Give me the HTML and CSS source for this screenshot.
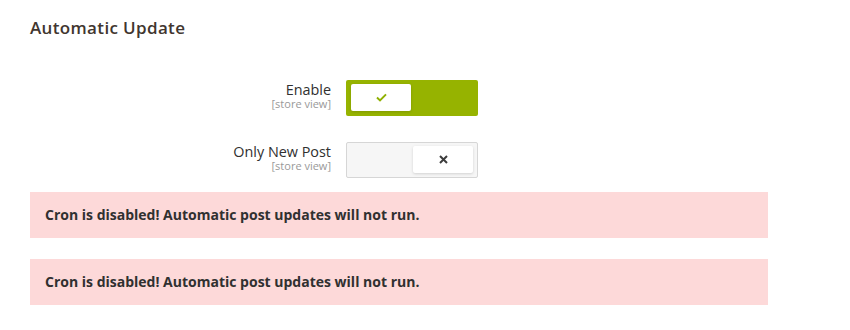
FILE: index.html
```html
<!DOCTYPE html>
<html lang="en">

<head>
    <meta charset="UTF-8">
    <title>Automatic Update</title>
    <link rel="stylesheet" href="styles.css">
</head>

<body>
    <div class="section">
        <h2 class="section-title">Automatic Update</h2>

        <div class="fields">
            <div class="field">
                <div class="field-label">
                    <span class="label-text">Enable</span>
                    <span class="scope">[store view]</span>
                </div>
                <div class="switch switch-on">
                    <span class="knob">
                        <svg width="11" height="9" viewBox="0 0 11 9">
                            <path d="M1 4.6 L4 7.4 L10 1.4" fill="none" stroke="#8fb000" stroke-width="2" />
                        </svg>
                    </span>
                </div>
            </div>

            <div class="field">
                <div class="field-label">
                    <span class="label-text">Only New Post</span>
                    <span class="scope">[store view]</span>
                </div>
                <div class="switch switch-off">
                    <span class="knob">
                        <svg width="9" height="9" viewBox="0 0 9 9">
                            <path d="M1 1 L8 8 M8 1 L1 8" fill="none" stroke="#3d3d3d" stroke-width="2" />
                        </svg>
                    </span>
                </div>
            </div>
        </div>

        <div class="message">Cron is disabled! Automatic post updates will not run.</div>
        <div class="message">Cron is disabled! Automatic post updates will not run.</div>
    </div>
</body>

</html>
```

FILE: styles.css
```css
* {
    margin: 0;
    padding: 0;
    box-sizing: border-box;
}

body {
    font-family: "Open Sans", "Noto Sans", sans-serif;
    color: #303030;
    background: #fff;
}

.section {
    padding: 16px 82px 0 30px;
}

.section-title {
    font-size: 17px;
    font-weight: 600;
    color: #41362f;
    line-height: 24px;
    letter-spacing: .35px;
}

.fields {
    display: flex;
    flex-direction: column;
    gap: 26px;
    margin-top: 40px;
}

.field {
    display: grid;
    grid-template-columns: 301px 132px;
    column-gap: 15px;
    align-items: start;
}

.field-label {
    display: flex;
    flex-direction: column;
    align-items: flex-end;
    padding-top: 1px;
}

.label-text {
    font-size: 14.4px;
    line-height: 17px;
    color: #303030;
}

.scope {
    font-size: 11px;
    line-height: 12px;
    color: #999;
}

.switch {
    height: 36px;
    border-radius: 2px;
    display: flex;
    align-items: center;
    padding: 0 5px;
}

.switch-on {
    background: #96b300;
    justify-content: flex-start;
}

.switch-off {
    background: #f6f6f6;
    border: 1px solid #d6d6d6;
    justify-content: flex-end;
    padding: 0 4px;
}

.knob {
    width: 60px;
    height: 27px;
    margin-top: -1px;
    background: #fff;
    border-radius: 2px;
    display: flex;
    align-items: center;
    justify-content: center;
    box-shadow: 0 1px 3px rgba(0, 0, 0, .15);
}

.message {
    background: #fdd9d9;
    font-size: 14px;
    font-weight: 700;
    color: #303030;
    line-height: 18px;
    padding: 14px 15px;
    margin-top: 14px;
}

.message + .message {
    margin-top: 21px;
}
```
